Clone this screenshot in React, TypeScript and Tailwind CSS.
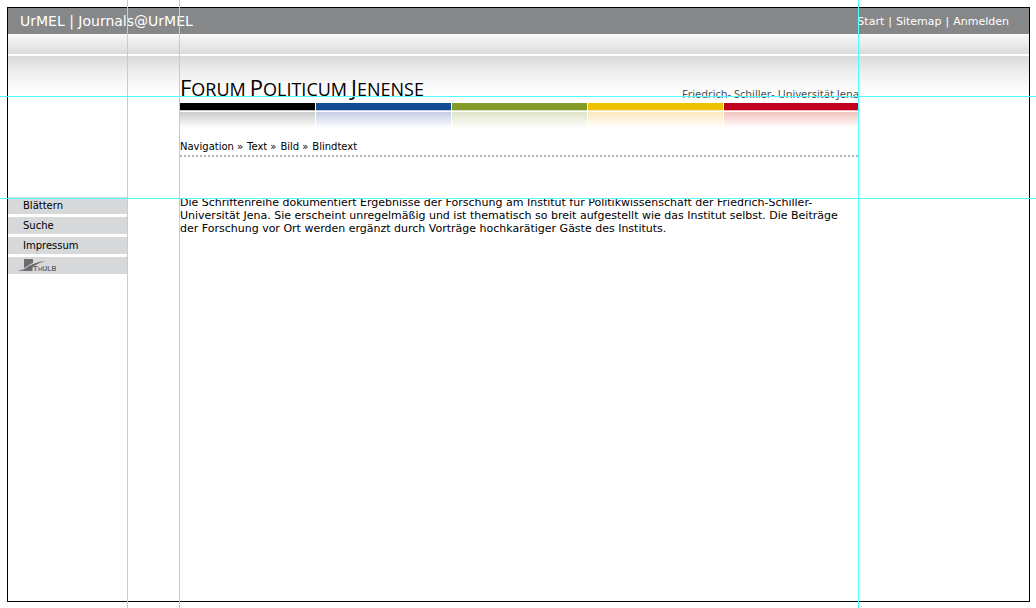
const topLinks = ["Start", "Sitemap", "Anmelden"];
const trail = ["Navigation", "Text", "Bild"];
const menu = ["Blättern", "Suche", "Impressum"];
const title = ["Forum", "Politicum", "Jenense"];

const bars = [
  { bar: "bg-black", line: "bg-[#c4c4c4]", fade: "from-[#cbcbcb]" },
  { bar: "bg-[#154b93]", line: "bg-[#c2cae0]", fade: "from-[#c5cce4]" },
  { bar: "bg-[#849b2a]", line: "bg-[#d9dfc0]", fade: "from-[#dde3c8]" },
  { bar: "bg-[#eec200]", line: "bg-[#f8e8b4]", fade: "from-[#fae9bc]" },
  { bar: "bg-[#c0001e]", line: "bg-[#efb9b6]", fade: "from-[#f1c4be]" },
];

function Guides() {
  return (
    <div aria-hidden="true" className="pointer-events-none absolute inset-0">
      <div className="absolute inset-y-0 left-[127px] w-px bg-[#4fffff]" />
      <div className="absolute inset-y-0 left-[179px] w-px bg-[#4fffff]" />
      <div className="absolute inset-y-0 left-[858px] w-px bg-[#4fffff]" />
      <div className="absolute inset-x-0 top-24 h-px bg-[#4fffff]" />
      <div className="absolute inset-x-0 top-[198px] h-px bg-[#4fffff]" />
    </div>
  );
}

function ThulbLogo() {
  return (
    <svg viewBox="0 0 38 14" className="h-3.5 w-[38px]" role="img" aria-label="ThULB">
      <path d="M6 0h9v4L6 9z" fill="#6a6b6d" />
      <path d="M0 12C7 11 11 3.500 29 1.800 20 4 17 6.500 14.500 8.500V12z" fill="#6a6b6d" />
      <path d="M4 11.500C9 8.500 12 4.500 20 2.600" fill="none" stroke="#d7d8da" strokeWidth="0.700" />
      <text x="15" y="12" fill="#6a6b6d" fontSize="8" fontWeight="700" fontFamily="Liberation Sans, Arial, sans-serif">
        T<tspan fontSize="6">H</tspan><tspan fontSize="7">ULB</tspan>
      </text>
    </svg>
  );
}

export default function App() {
  return (
    <div className="relative flex min-h-screen flex-col bg-white pt-[7px] pr-1.5 pb-1.5 pl-[7px] font-['Verdana','DejaVu_Sans',sans-serif] text-black">
      <div className="flex grow flex-col border border-black">
        <header>
          <div className="flex h-[26px] items-center justify-between bg-[#868788] pr-5 pl-3 text-white">
            <p className="text-[14px]">UrMEL | Journals@UrMEL</p>
            <nav className="flex gap-1 pt-0.5 text-[11px]">
              {topLinks.map((label, i) => (
                <span key={label} className="flex gap-1">
                  {i > 0 && <span>|</span>}
                  <a href="#">{label}</a>
                </span>
              ))}
            </nav>
          </div>
          <div className="h-5 bg-linear-to-b from-[#f9f9f9] to-[#dcdcdc]" />
        </header>

        <div className="mt-0.5 grow bg-[linear-gradient(to_bottom,#d9d9d9,#ececec_14px,#fafafa_30px,#ffffff_40px)]">
          <div className="flex gap-[52px]">
            <nav className="w-[120px] shrink-0 pt-[141px]">
              <ul className="flex flex-col gap-[3px] text-[10px] leading-[18px]">
                {menu.map((label) => (
                  <li key={label} className="h-[17px] bg-[#d7d8da] pl-[15px]">
                    <a href="#">{label}</a>
                  </li>
                ))}
                <li className="h-[17px] bg-[#d7d8da] pt-0.5 pl-2.5">
                  <a href="#" className="block">
                    <ThulbLogo />
                  </a>
                </li>
              </ul>
            </nav>

            <main className="max-w-[679px] min-w-0 grow pt-5">
              <div className="flex h-[27px] items-end justify-between">
                <h1 className="flex gap-1 font-['Open_Sans',sans-serif] text-[18px] leading-7">
                  {title.map((word) => (
                    <span key={word} className="uppercase first-letter:text-[22px]">
                      {word}
                    </span>
                  ))}
                </h1>
                <p className="pb-px font-['Noto_Sans',sans-serif] text-[11px] leading-4 text-[#505050]">
                  Friedrich- Schiller- Universität Jena
                </p>
              </div>
              <div className="grid grid-cols-5 gap-px">
                {bars.map(({ bar, line, fade }) => (
                  <div key={bar}>
                    <div className={`h-[7px] ${bar}`} />
                    <div className={`h-px ${line}`} />
                    <div className={`mt-px h-4 bg-linear-to-b to-white ${fade}`} />
                  </div>
                ))}
              </div>
              <nav className="flex gap-1 pt-3 pb-px text-[10px] leading-[14px]">
                {trail.map((label) => (
                  <span key={label} className="flex gap-[3px]">
                    <a href="#">{label}</a>
                    <span>»</span>
                  </span>
                ))}
                <a href="#">Blindtext</a>
              </nav>
              <div className="h-0.5 bg-[repeating-linear-gradient(to_right,#b4b4b4_0_2px,transparent_2px_4px)]" />
              <p className="pt-[39px] text-[11px] leading-[13px]">
                Die Schriftenreihe dokumentiert Ergebnisse der Forschung am Institut für Politikwissenschaft der
                Friedrich-Schiller-Universität Jena. Sie erscheint unregelmäßig und ist thematisch so breit
                aufgestellt wie das Institut selbst. Die Beiträge der Forschung vor Ort werden ergänzt durch
                Vorträge hochkarätiger Gäste des Instituts.
              </p>
            </main>
          </div>
        </div>
      </div>
      <Guides />
    </div>
  );
}
